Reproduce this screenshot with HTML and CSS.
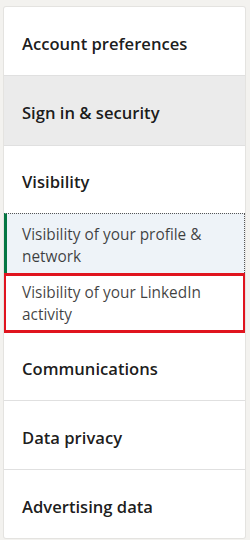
FILE: index.html
```html
<!DOCTYPE html>
<html>
<head>
<meta charset="utf-8">
<link rel="stylesheet" href="styles.css">
</head>
<body>
<nav class="card">
  <div class="item first">Account preferences</div>
  <div class="item active">Sign in &amp; security</div>
  <div class="item section">Visibility</div>
  <div class="sub current">Visibility of your profile &amp; network</div>
  <div class="sub highlighted">Visibility of your LinkedIn activity</div>
  <div class="item comm">Communications</div>
  <div class="item">Data privacy</div>
  <div class="item last">Advertising data</div>
</nav>
</body>
</html>
```
FILE: styles.css
```css
html, body {
  margin: 0;
  padding: 0;
}
body {
  background: #f3f2ef;
  font-family: "Open Sans", "Noto Sans", sans-serif;
  color: rgba(0,0,0,0.9);
  width: 250px;
  height: 540px;
  padding: 7px 5px 2px 4px;
  box-sizing: border-box;
}
.card {
  background: #fff;
  border-radius: 2px;
  box-shadow: 0 0 0 1px rgba(0,0,0,0.06);
  display: flex;
  flex-direction: column;
  overflow: hidden;
}
.item {
  flex-shrink: 0;
  font-size: 16.6px;
  font-weight: 600;
  height: 69px;
  display: flex;
  align-items: center;
  padding-left: 18px;
  padding-top: 4px;
  border-bottom: 1px solid #e0e0e0;
  box-sizing: border-box;
}
.item.active {
  background: #ebebeb;
  height: 70px;
}
.item.section {
  border-bottom: none;
  height: 67px;
}
.item.comm {
  height: 68px;
}
.item.last {
  border-bottom: none;
  height: 68px;
}
.sub {
  flex-shrink: 0;
  font-size: 15.4px;
  line-height: 22px;
  color: rgba(0,0,0,0.75);
  box-sizing: border-box;
  height: 60px;
}
.sub.current {
  background: #eef3f8;
  border-left: 3px solid #057642;
  border-top: 1px dotted #555;
  border-right: 1px dotted #555;
  padding: 10px 10px 0 15px;
}
.sub.highlighted {
  border: 3px solid #e0141e;
  margin: 0 -1px;
  padding: 6px 10px 0 16px;
}
```
